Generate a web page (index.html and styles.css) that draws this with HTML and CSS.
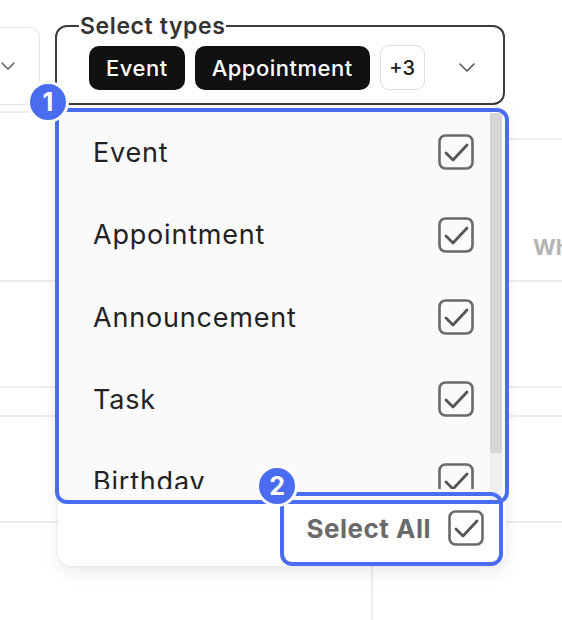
FILE: index.html
```html
<!DOCTYPE html>
<html lang="en">
<head>
<meta charset="utf-8">
<title>Select types</title>
<link rel="stylesheet" href="styles.css">
</head>
<body>
<div class="page">
  <div class="toolbar">
    <div class="mini-select">
      <svg class="chev-sm" width="14" height="8" viewBox="0 0 14 8"><path d="M1 1 L7 7 L13 1" fill="none" stroke="#666" stroke-width="1.6" stroke-linecap="round" stroke-linejoin="round"/></svg>
    </div>
    <fieldset class="type-select">
      <legend>Select types</legend>
      <div class="select-row">
        <div class="chips">
          <span class="chip">Event</span>
          <span class="chip">Appointment</span>
          <span class="chip-more">+3</span>
        </div>
        <svg class="chev" width="16" height="9" viewBox="0 0 16 9"><path d="M1 1 L8 8 L15 1" fill="none" stroke="#555" stroke-width="1.6" stroke-linecap="round" stroke-linejoin="round"/></svg>
      </div>
    </fieldset>
  </div>

  <div class="board">
    <div class="lane lane-left">
      <div class="cell h-a"></div>
      <div class="cell h-b"></div>
      <div class="cell h-c"></div>
      <div class="cell h-d"></div>
      <div class="cell h-c"></div>
    </div>
    <div class="lane-mid">
      <div class="sub sub-a"></div>
      <div class="sub sub-b"></div>
    </div>
    <div class="lane lane-right">
      <div class="cell r-a"></div>
      <div class="cell r-b"><span class="col-head">Wh</span></div>
      <div class="cell h-c"></div>
      <div class="cell h-d"></div>
      <div class="cell h-c"></div>
    </div>
  </div>

  <div class="dropdown">
    <div class="list-wrap">
      <ul class="options">
        <li class="option"><span>Event</span><svg class="cb" width="36" height="36" viewBox="0 0 36 36"><rect x="1.5" y="1.5" width="33" height="33" rx="6" fill="none" stroke="#6a6a6a" stroke-width="2.6"/><path d="M8 19 L15 26 L29 11" fill="none" stroke="#555" stroke-width="2.8" stroke-linecap="round" stroke-linejoin="round"/></svg></li>
        <li class="option"><span>Appointment</span><svg class="cb" width="36" height="36" viewBox="0 0 36 36"><rect x="1.5" y="1.5" width="33" height="33" rx="6" fill="none" stroke="#6a6a6a" stroke-width="2.6"/><path d="M8 19 L15 26 L29 11" fill="none" stroke="#555" stroke-width="2.8" stroke-linecap="round" stroke-linejoin="round"/></svg></li>
        <li class="option"><span>Announcement</span><svg class="cb" width="36" height="36" viewBox="0 0 36 36"><rect x="1.5" y="1.5" width="33" height="33" rx="6" fill="none" stroke="#6a6a6a" stroke-width="2.6"/><path d="M8 19 L15 26 L29 11" fill="none" stroke="#555" stroke-width="2.8" stroke-linecap="round" stroke-linejoin="round"/></svg></li>
        <li class="option"><span>Task</span><svg class="cb" width="36" height="36" viewBox="0 0 36 36"><rect x="1.5" y="1.5" width="33" height="33" rx="6" fill="none" stroke="#6a6a6a" stroke-width="2.6"/><path d="M8 19 L15 26 L29 11" fill="none" stroke="#555" stroke-width="2.8" stroke-linecap="round" stroke-linejoin="round"/></svg></li>
        <li class="option"><span>Birthday</span><svg class="cb" width="36" height="36" viewBox="0 0 36 36"><rect x="1.5" y="1.5" width="33" height="33" rx="6" fill="none" stroke="#6a6a6a" stroke-width="2.6"/><path d="M8 19 L15 26 L29 11" fill="none" stroke="#555" stroke-width="2.8" stroke-linecap="round" stroke-linejoin="round"/></svg></li>
      </ul>
      <div class="scrollbar"><div class="thumb"></div></div>
    </div>
    <div class="footer">
      <span class="select-all">Select All</span>
      <svg class="cb" width="36" height="36" viewBox="0 0 36 36"><rect x="1.5" y="1.5" width="33" height="33" rx="6" fill="none" stroke="#6a6a6a" stroke-width="2.6"/><path d="M8 19 L15 26 L29 11" fill="none" stroke="#555" stroke-width="2.8" stroke-linecap="round" stroke-linejoin="round"/></svg>
    </div>
  </div>

  <div class="hl hl-1"></div>
  <div class="hl hl-2"></div>
  <div class="badge badge-1">1</div>
  <div class="badge badge-2">2</div>
</div>
</body>
</html>
```

FILE: styles.css
```css
* { box-sizing: border-box; }
html, body { margin: 0; padding: 0; background: #fff; }
body { font-family: Inter, "Noto Sans", "Liberation Sans", sans-serif; }

.page {
  position: relative;
  width: 562px;
  height: 620px;
  overflow: hidden;
  background: #fff;
}

/* ---------- toolbar ---------- */
.toolbar {
  display: flex;
  align-items: flex-start;
  gap: 15px;
  height: 109px;
  padding-top: 13px;
}
.mini-select {
  margin-top: 14px;
  margin-left: -12px;
  width: 52px;
  height: 78px;
  border: 1.5px solid #e4e4e4;
  border-radius: 10px;
  display: flex;
  align-items: center;
  padding-left: 12px;
}
.type-select {
  margin: 0;
  width: 450px;
  height: 92px;
  border: 2px solid #3c3c3c;
  border-radius: 12px;
  padding: 6px 22px 0 32px;
}
.type-select legend {
  margin-left: -10px;
  padding: 0 1px;
  font-size: 23px;
  line-height: 26px;
  font-weight: 600;
  letter-spacing: 0.6px;
  color: #333;
}
.select-row {
  display: flex;
  align-items: center;
  justify-content: space-between;
}
.chips {
  display: flex;
  align-items: center;
  gap: 10px;
}
.chip {
  height: 44px;
  display: inline-flex;
  align-items: center;
  padding: 0 17px;
  background: #111;
  color: #fff;
  border-radius: 10px;
  font-size: 22px;
  font-weight: 500;
  letter-spacing: 0.5px;
}
.chip-more {
  width: 45px;
  height: 45px;
  display: inline-flex;
  align-items: center;
  justify-content: center;
  border: 1.5px solid #dedede;
  border-radius: 9px;
  font-size: 20px;
  font-weight: 500;
  color: #222;
}
.chev { margin-right: 6px; }

/* ---------- background board ---------- */
.board {
  display: flex;
  height: 511px;
}
.lane { display: flex; flex-direction: column; }
.lane-left { width: 58px; }
.lane-right { width: 56px; }
.lane-mid { flex: 1; display: flex; }
.sub-a { width: 315px; border-right: 2px solid #ececec; }
.sub-b { flex: 1; }
.cell { border-bottom: 2px solid #ececec; flex: none; }
.h-a { height: 4px; }
.h-b { height: 169px; }
.h-c { height: 106px; }
.h-d { height: 29px; }
.r-a { height: 31px; }
.r-b {
  height: 142px;
  display: flex;
  align-items: flex-end;
  padding: 0 0 20px 27px;
}
.col-head {
  font-size: 22px;
  font-weight: 700;
  color: #b4b4b4;
  white-space: nowrap;
}

/* ---------- dropdown ---------- */
.dropdown {
  position: absolute;
  left: 58px;
  top: 109px;
  width: 448px;
  height: 457px;
  background: #fff;
  border-radius: 0 0 14px 14px;
  box-shadow: 0 6px 18px rgba(0, 0, 0, 0.08), 0 1px 4px rgba(0, 0, 0, 0.05);
  display: flex;
  flex-direction: column;
  overflow: hidden;
}
.list-wrap {
  height: 395px;
  display: flex;
  align-items: flex-start;
  background: #fafafa;
  overflow: hidden;
}
.options {
  list-style: none;
  margin: 0;
  padding: 2px 0 0 0;
  flex: 1;
  height: 380px;
  overflow: hidden;
}
.option {
  height: 82px;
  display: flex;
  align-items: center;
  justify-content: space-between;
  padding: 0 16px 0 35px;
  font-size: 27px;
  color: #222;
  letter-spacing: 0.8px;
}
.option:nth-child(2) { height: 83px; }
.scrollbar {
  width: 12px;
  height: 387px;
  margin: 4px 4px 0 0;
  background: #efefef;
}
.thumb {
  height: 340px;
  background: #d5d5d5;
}
.footer {
  flex: 1;
  display: flex;
  align-items: center;
  justify-content: flex-end;
  gap: 17px;
  padding: 0 22px 14px 0;
}
.select-all {
  font-size: 26px;
  font-weight: 700;
  letter-spacing: 0.5px;
  color: #6a6a6a;
}
.cb { flex: none; display: block; }

/* ---------- annotations ---------- */
.hl {
  position: absolute;
  border: 4px solid #4a6cf0;
  border-radius: 12px;
}
.hl-1 { left: 55px; top: 108px; width: 454px; height: 396px; }
.hl-2 { left: 280px; top: 492px; width: 223px; height: 74px; }
.badge {
  position: absolute;
  width: 42px;
  height: 42px;
  border-radius: 50%;
  background: #4a6cf0;
  border: 3px solid #fff;
  color: #fff;
  font-size: 25px;
  font-weight: 700;
  display: flex;
  align-items: center;
  justify-content: center;
  line-height: 1;
}
.badge-1 { left: 27px; top: 81px; }
.badge-2 { left: 256px; top: 465px; }
```
